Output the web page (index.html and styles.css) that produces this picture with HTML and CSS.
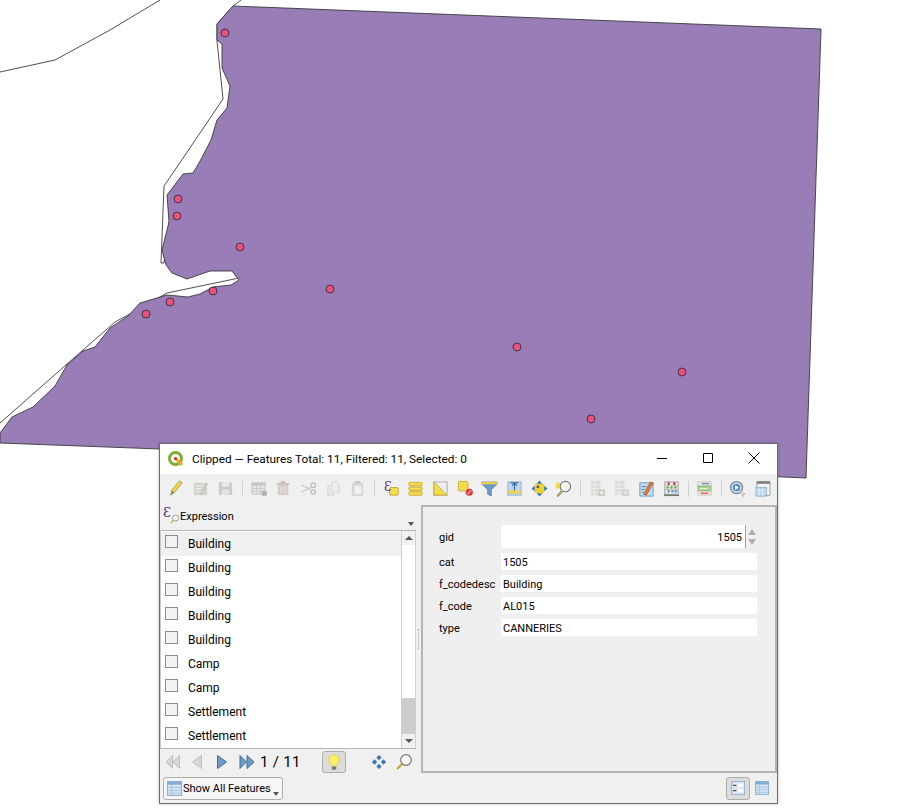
FILE: index.html
```html
<!DOCTYPE html>
<html lang="en">
<head>
<meta charset="utf-8">
<title>Clipped</title>
<link rel="stylesheet" href="styles.css">
</head>
<body>
<svg class="map" width="911" height="808" viewBox="0 0 911 808">
  <g class="outline">
    <path d="M0 72L55 60L110 30L160 0"/>
    <path d="M241 0L233 6L217 24L217 41L223 99L175 170L164 186L161 263L164 263L169 222"/>
    <path d="M239 278L167 293L128 315L115 322L83 350L0 423"/>
  </g>
  <path class="land" d="M233 6L821 29L806 478L160 449L0 443V433L12 417L33 407L55 386L67 365L83 351L95 347L110 328L128 316L140 303L167 295L188 297L200 294L213 287L231 285L239 280L232 271L210 271L187 279L172 273L166 265L162 250L169 222L167 195L183 174L193 173L199 163L211 140L217 120L227 108L230 86L222 68L222 44L217 40L217 24Z"/>
  <g class="pts">
    <circle cx="225" cy="33" r="4"/><circle cx="178" cy="199" r="4"/><circle cx="177" cy="216" r="4"/>
    <circle cx="240" cy="247" r="4"/><circle cx="330" cy="289" r="4"/><circle cx="213" cy="291" r="4"/>
    <circle cx="170" cy="302" r="4"/><circle cx="146" cy="314" r="4"/><circle cx="517" cy="347" r="4"/>
    <circle cx="682" cy="372" r="4"/><circle cx="591" cy="419" r="4"/>
  </g>
</svg>

<section class="window">
  <header class="titlebar">
    <svg class="logo" width="18" height="18" viewBox="0 0 18 18"><circle cx="8.500" cy="8.500" r="6" fill="none" stroke="#7fae2e" stroke-width="3"/><path d="M8.500 8.500L15 15" stroke="#e9a92f" stroke-width="3"/><circle cx="8.500" cy="8.500" r="1.600" fill="#c33"/></svg>
    <span class="title">Clipped — Features Total: 11, Filtered: 11, Selected: 0</span>
    <div class="winctl">
      <svg width="14" height="14" viewBox="0 0 14 14"><path d="M2 7.500H12" stroke="#000"/></svg>
      <svg width="14" height="14" viewBox="0 0 14 14"><path d="M2.500 2.500H11.500V11.500H2.500Z" fill="none" stroke="#000"/></svg>
      <svg width="14" height="14" viewBox="0 0 14 14"><path d="M1.500 1.500L12.500 12.500M12.500 1.500L1.500 12.500" stroke="#000"/></svg>
    </div>
  </header>

  <div class="toolbar">
    <span class="tb"><svg viewBox="0 0 18 18"><path d="M3 16L4 11L12 1L15 3L7 13Z" fill="#f2d64b" stroke="#a08a2a" stroke-width=".8"/><path d="M3 16L4 11L7 13Z" fill="#8a8a80"/></svg></span>
    <span class="tb off"><svg viewBox="0 0 18 18"><rect x="1" y="3" width="14" height="13" fill="#c9c9c2"/><path d="M3 6H11M3 9H9M3 12H9" stroke="#eee"/><path d="M7 15L14 3L16 4L9 16Z" fill="#b5b5ae"/></svg></span>
    <span class="tb off"><svg viewBox="0 0 18 18"><path d="M2 2H14L16 4V16H2Z" fill="#b9bcbf"/><rect x="5" y="2" width="8" height="5" fill="#e6e6e6"/><rect x="5" y="10" width="8" height="6" fill="#dedede"/></svg></span>
    <span class="sep"></span>
    <span class="tb off"><svg viewBox="0 0 18 18"><rect x="1" y="3" width="14" height="12" fill="#e4e4e4" stroke="#b5b5b5"/><rect x="1" y="3" width="14" height="3" fill="#b5b5b5"/><path d="M1 9H15M1 12H15M6 6V15M10 6V15" stroke="#bbb"/><circle cx="14" cy="14" r="3" fill="#999"/></svg></span>
    <span class="tb off"><svg viewBox="0 0 18 18"><rect x="3" y="5" width="11" height="11" fill="#cdbdb6"/><rect x="2" y="3" width="13" height="2" fill="#b9aaa3"/><rect x="6" y="1" width="5" height="2" fill="#b9aaa3"/><path d="M6 7V14M8.500 7V14M11 7V14" stroke="#e6e0dc"/></svg></span>
    <span class="tb off"><svg viewBox="0 0 18 18"><path d="M1 5L11 10M1 13L11 8" stroke="#bbb" stroke-width="1.400"/><circle cx="14" cy="5.500" r="2.400" fill="none" stroke="#aaa" stroke-width="1.400"/><circle cx="14" cy="12.500" r="2.400" fill="none" stroke="#aaa" stroke-width="1.400"/></svg></span>
    <span class="tb off"><svg viewBox="0 0 18 18"><path d="M3 6H9V16H3Z" fill="#e4e4e4" stroke="#ccc"/><path d="M7 2H12L15 5V13H7Z" fill="#ececec" stroke="#ccc"/></svg></span>
    <span class="tb off"><svg viewBox="0 0 18 18"><rect x="3" y="3" width="12" height="14" rx="1" fill="#cfcfca"/><rect x="6" y="1" width="6" height="3" fill="#bbb"/><rect x="6" y="6" width="7" height="9" fill="#f0f0f0"/></svg></span>
    <span class="sep"></span>
    <span class="tb"><svg viewBox="0 0 18 18"><rect x="7" y="8" width="9" height="8" rx="1" fill="#f5dc4d" stroke="#c0a52d"/><text class="eps" x="1" y="12">Ɛ</text></svg></span>
    <span class="tb"><svg viewBox="0 0 18 18"><rect x="2" y="2.500" width="14" height="3.600" rx="1" fill="#f5dc4d" stroke="#c9ae35"/><rect x="2" y="7.500" width="14" height="3.600" rx="1" fill="#f5dc4d" stroke="#c9ae35"/><rect x="2" y="12.500" width="14" height="3.600" rx="1" fill="#f5dc4d" stroke="#c9ae35"/></svg></span>
    <span class="tb"><svg viewBox="0 0 18 18"><rect x="2" y="2" width="14" height="14" fill="#eee" stroke="#aaa"/><path d="M2 2L16 16H2Z" fill="#f5dc4d" stroke="#c9ae35"/></svg></span>
    <span class="tb"><svg viewBox="0 0 18 18"><rect x="1.500" y="1.500" width="10" height="10" rx="1" fill="#f5dc4d" stroke="#c9ae35"/><circle cx="13" cy="13" r="3.800" fill="#d8393c"/><path d="M11 15L15 11" stroke="#fff"/></svg></span>
    <span class="tb"><svg viewBox="0 0 18 18"><path d="M1 2H17V4.500L11 10V17L7 15V10L1 4.500Z" fill="#6b9cc8" stroke="#3f6f9c" stroke-width=".6"/><rect x="1" y="2" width="16" height="2.600" fill="#e9cf4a"/></svg></span>
    <span class="tb"><svg viewBox="0 0 18 18"><rect x="2" y="2" width="14" height="14" fill="#bfd6ec" stroke="#8fb2d2"/><rect x="2.500" y="11" width="13" height="3.500" fill="#f0d64a"/><path d="M9 3V11M6.500 6L9 3.500L11.500 6M5 3H13" stroke="#3f6f9c" stroke-width="1.300" fill="none"/></svg></span>
    <span class="tb"><svg viewBox="0 0 18 18"><rect x="4" y="4" width="10" height="10" fill="#f0d22f"/><path d="M9 .5L12 4H6ZM9 17.500L6 14H12ZM.5 9L4 6V12ZM17.500 9L14 12V6Z" fill="#3f76ad"/><rect x="6" y="6" width="2.500" height="2.500" fill="#556"/></svg></span>
    <span class="tb"><svg viewBox="0 0 18 18"><path d="M2 17L6 12L7.500 13.500L3 17.500Z" fill="#dcbc36" stroke="#333" stroke-width=".5"/><path d="M1 3H5V9H1Z" fill="#f0d84a"/><circle cx="11" cy="7" r="5.500" fill="#f4f4ee" stroke="#777" stroke-width="1.200"/></svg></span>
    <span class="sep"></span>
    <span class="tb off"><svg viewBox="0 0 18 18"><rect x="2" y="1" width="10" height="15" fill="#d2d2cc"/><path d="M2 5H12M2 9H12M2 13H12M6 1V16" stroke="#eee"/><rect x="10" y="10" width="7" height="7" fill="#bdbdb4"/><path d="M13.500 11.500V15.500M11.500 13.500H15.500" stroke="#fff"/></svg></span>
    <span class="tb off"><svg viewBox="0 0 18 18"><rect x="2" y="1" width="10" height="15" fill="#d2d2cc"/><path d="M2 5H12M2 9H12M2 13H12M6 1V16" stroke="#eee"/><rect x="10" y="10" width="7" height="7" fill="#c4c4c0"/><path d="M12 12L15 15M15 12L12 15" stroke="#fff"/></svg></span>
    <span class="tb"><svg viewBox="0 0 18 18"><rect x="2" y="3" width="14" height="14" fill="#c6daee" stroke="#6d99c4"/><path d="M4 7H9M4 10H7M4 13H6" stroke="#53799f"/><path d="M6 15L13 2L16 3.500L9 16Z" fill="#e8792f" stroke="#7a4a23" stroke-width=".6"/></svg></span>
    <span class="tb"><svg viewBox="0 0 18 18"><rect x="1" y="15" width="16" height="2" fill="#777"/><rect x="2" y="2" width="14" height="13" fill="#f1f1f1" stroke="#999"/><path d="M2 6H16M2 10H16" stroke="#bbb"/><circle cx="6" cy="4" r="1.500" fill="#c0504d"/><circle cx="12" cy="4" r="1.500" fill="#c0504d"/><circle cx="5" cy="8" r="1.300" fill="#6aa84f"/><circle cx="9" cy="8" r="1.300" fill="#6aa84f"/><circle cx="13" cy="8" r="1.300" fill="#6aa84f"/><circle cx="6" cy="12" r="1.300" fill="#5b93c4"/><circle cx="10" cy="12" r="1.300" fill="#5b93c4"/><circle cx="13.500" cy="12" r="1.300" fill="#5b93c4"/></svg></span>
    <span class="sep"></span>
    <span class="tb"><svg viewBox="0 0 18 18"><rect x="2" y="2" width="14" height="4" fill="#f4f4f4" stroke="#bbb"/><rect x="2" y="7" width="14" height="4" fill="#a9d492" stroke="#8fbb7b"/><rect x="2" y="12" width="14" height="4" fill="#f7e0e0" stroke="#ccb"/><path d="M4 9H12" stroke="#e6f3df"/><path d="M6 4H14" stroke="#555"/><path d="M5 14H13" stroke="#c33"/></svg></span>
    <span class="sep"></span>
    <span class="tb"><svg viewBox="0 0 18 18"><circle cx="8" cy="8" r="6.300" fill="#dfe8f0" stroke="#7a8a96" stroke-width="1.500"/><circle cx="8" cy="8" r="4" fill="#4f8ec6"/><path d="M6.500 5.500L10.500 8L6.500 10.500Z" fill="#fff"/><path d="M10 10L17 15L14.500 15.500L15 17.500Z" fill="#fff" stroke="#999" stroke-width=".7"/></svg></span>
    <span class="tb"><svg viewBox="0 0 18 18"><rect x="3" y="1.500" width="14" height="15" rx="1" fill="#f1f1f1" stroke="#9a9fa4"/><rect x="3" y="1.500" width="14" height="2.500" fill="#777c80"/><rect x="2" y="8" width="11" height="9" fill="#bcd4ea" stroke="#8fb2d2"/><path d="M2 11H13M2 14H13M5.500 8V17M9 8V17" stroke="#dfeaf4"/></svg></span>
  </div>

  <div class="main">
    <div class="left">
      <div class="exprbar">
        <svg class="expr-ic" width="18" height="18" viewBox="0 0 18 18"><text class="eps" x="0" y="11">Ɛ</text><circle cx="12.500" cy="12" r="3" fill="#fff" stroke="#999"/><path d="M10.500 14L8 17" stroke="#d4b53c" stroke-width="1.500"/></svg>
        <span class="expr-label">Expression</span>
        <i class="caret small"></i>
      </div>
      <div class="listbox">
        <ul class="rows">
          <li class="row hover"><b class="check"></b>Building</li>
          <li class="row"><b class="check"></b>Building</li>
          <li class="row"><b class="check"></b>Building</li>
          <li class="row"><b class="check"></b>Building</li>
          <li class="row"><b class="check"></b>Building</li>
          <li class="row"><b class="check"></b>Camp</li>
          <li class="row"><b class="check"></b>Camp</li>
          <li class="row"><b class="check"></b>Settlement</li>
          <li class="row"><b class="check"></b>Settlement</li>
        </ul>
        <div class="scroll">
          <span class="sbtn"><i class="tri up"></i></span>
          <span class="thumb"></span>
          <span class="track"></span>
          <span class="sbtn"><i class="tri down"></i></span>
        </div>
      </div>
      <div class="nav">
        <svg class="nav1" width="16" height="16" viewBox="0 0 16 16"><path d="M7.500 1.500V14.500L1 8ZM14.500 1.500V14.500L8 8Z" fill="#d5d8da" stroke="#bcc0c3"/></svg>
        <svg class="nav2" width="12" height="16" viewBox="0 0 12 16"><path d="M10.500 1.500V14.500L1.500 8Z" fill="#d5d8da" stroke="#bcc0c3"/></svg>
        <svg class="nav3" width="12" height="16" viewBox="0 0 12 16"><path d="M1.500 1.500V14.500L10.500 8Z" fill="#6f9ac4" stroke="#3f6f9c"/></svg>
        <svg class="nav4" width="16" height="16" viewBox="0 0 16 16"><path d="M1 1.500V14.500L7.500 8ZM8 1.500V14.500L15 8Z" fill="#6f9ac4" stroke="#3f6f9c"/></svg>
        <span class="count">1 / 11</span>
        <span class="bulb"><svg width="16" height="19" viewBox="0 0 18 20"><path d="M9 1C5 1 3 4 3 7C3 10 6 11 6 14H12C12 11 15 10 15 7C15 4 13 1 9 1Z" fill="#f7f06a" stroke="#d8cf55"/><rect x="6.500" y="14.500" width="5" height="3.500" fill="#777"/></svg></span>
        <svg class="nav-move" width="16" height="16" viewBox="0 0 18 18"><path d="M9 1L12 4L9 7L6 4ZM9 11L12 14L9 17L6 14ZM1 9L4 6L7 9L4 12ZM11 9L14 6L17 9L14 12Z" fill="#3f76ad"/></svg>
        <svg class="nav-zoom" width="18" height="18" viewBox="0 0 18 18"><circle cx="11" cy="7" r="5.300" fill="#f7f7f2" stroke="#777" stroke-width="1.200"/><path d="M2 16L7 11" stroke="#c9a530" stroke-width="2.200"/></svg>
      </div>
    </div>
    <div class="splitter"></div>
    <div class="form">
      <div class="field first"><label>gid</label><div class="spin"><span class="spin-val">1505</span><span class="spin-btns"><i class="tri up lt"></i><i class="tri down lt"></i></span></div></div>
      <div class="field"><label>cat</label><span class="val">1505</span></div>
      <div class="field"><label>f_codedesc</label><span class="val">Building</span></div>
      <div class="field"><label>f_code</label><span class="val">AL015</span></div>
      <div class="field"><label>type</label><span class="val">CANNERIES</span></div>
    </div>
  </div>

  <footer class="foot">
    <button class="showall" type="button">
      <svg width="15" height="15" viewBox="0 0 16 16"><rect x=".5" y=".5" width="15" height="15" fill="#d4e4f4" stroke="#84aed4"/><rect x=".5" y=".5" width="15" height="3.500" fill="#84aed4"/><path d="M1 7H15M1 10H15M1 13H15M5 4V15" stroke="#a5c4e0"/></svg>
      <span>Show All Features</span>
      <i class="caret"></i>
    </button>
    <div class="views">
      <span class="view on"><svg width="14" height="14" viewBox="0 0 16 16"><rect x=".5" y=".5" width="15" height="15" fill="#d9e6f2" stroke="#8fb2d2"/><path d="M2 5H6M2 11H6" stroke="#555" stroke-width="1.500"/><rect x="8" y="3" width="6" height="4" fill="#fff"/><rect x="8" y="9" width="6" height="4" fill="#fff"/></svg></span>
      <span class="view"><svg width="14" height="14" viewBox="0 0 16 16"><rect x=".5" y=".5" width="15" height="15" fill="#d4e4f4" stroke="#84aed4"/><rect x=".5" y=".5" width="15" height="3.500" fill="#84aed4"/><path d="M1 7H15M1 10H15M1 13H15M5 4V15" stroke="#a5c4e0"/></svg></span>
    </div>
  </footer>
</section>
</body>
</html>
```

FILE: styles.css
```css
* { box-sizing: border-box; }
html, body { margin: 0; height: 100%; background: #fff; overflow: hidden; }
body { font-family: Roboto, "Open Sans", sans-serif; font-size: 12px; color: #000; }

.map { position: absolute; left: 0; top: 0; display: block; }
.outline path { fill: none; stroke: #3c3c3c; stroke-width: 0.9; }
.land { fill: #987db7; stroke: #3a3a3a; stroke-width: 0.9; stroke-linejoin: round; }
.pts circle { fill: #e8507e; stroke: #33303a; stroke-width: 0.9; }
.eps { font-family: "DejaVu Serif", serif; font-size: 13px; fill: #5a2d76; }

.window { position: absolute; left: 159px; top: 443px; width: 619px; height: 361px; display: flex; flex-direction: column; background: #f0f0f0; border: 1px solid #6b6b6b; box-shadow: 0 0 3px rgba(0,0,0,.25); }

.titlebar { height: 30px; background: #fff; display: flex; align-items: center; padding-left: 7px; flex: none; }
.logo { flex: none; }
.title { margin-left: 7px; font-size: 11.800px; white-space: nowrap; }
.winctl { margin-left: auto; display: flex; gap: 32px; padding: 0 16px 2px 0; }
.winctl svg { display: block; }

.toolbar { height: 31px; flex: none; display: flex; align-items: center; padding: 0 0 2px 4px; background: #f0f0f0; }
.tb { width: 24.700px; height: 24px; display: flex; align-items: center; justify-content: center; flex: none; }
.tb svg { width: 17px; height: 17px; display: block; }
.tb.off { opacity: .7; }
.sep { width: 8.600px; height: 16px; flex: none; }
.sep::before { content: ""; display: block; width: 1px; height: 16px; margin-left: 4px; background: #d0d0d0; }

.main { flex: 1; display: flex; min-height: 0; }
.left { width: 256px; flex: none; display: flex; flex-direction: column; }
.exprbar { height: 25px; display: flex; align-items: center; padding: 0 0 2px 3px; position: relative; flex: none; }
.expr-ic { flex: none; margin-top: -3px; }
.expr-label { font-size: 11px; margin-left: -1px; }
.caret { display: block; width: 0; height: 0; border: 3.500px solid transparent; border-top: 4px solid #555; border-bottom: 0; }
.caret.small { position: absolute; right: 2px; bottom: 4px; }

.listbox { height: 219px; flex: none; display: flex; border-top: 1px solid #b5b5b5; border-bottom: 1px solid #b5b5b5; border-left: 1px solid #c8c8c8; background: #fff; }
.rows { list-style: none; margin: 0; padding: 1px 0 0; flex: 1; min-width: 0; }
.row { height: 24px; display: flex; align-items: center; }
.row.hover { background: #f0f0f0; }
.check { width: 13px; height: 13px; margin: -5px 10px 0 4px; border: 1px solid #8c8c8c; background: #f2f2f2; flex: none; }
.scroll { width: 15px; flex: none; display: flex; flex-direction: column; border-left: 1px solid #d0d0d0; border-right: 1px solid #d0d0d0; background: #f0f0f0; }
.sbtn { height: 14px; flex: none; display: flex; align-items: center; justify-content: center; background: #f0f0f0; }
.thumb { height: 153px; flex: none; background: #fff; }
.track { flex: 1; background: #cdcdcd; }
.tri { display: block; width: 0; height: 0; border-left: 4px solid transparent; border-right: 4px solid transparent; }
.tri.up { border-bottom: 4px solid #555; }
.tri.down { border-top: 4px solid #555; }
.tri.lt { border-left-width: 4.500px; border-right-width: 4.500px; }
.tri.lt.up { border-bottom: 6px solid #b0b0b0; }
.tri.lt.down { border-top: 6px solid #b0b0b0; }

.nav { height: 24px; flex: none; display: flex; align-items: center; padding: 2px 0 0 5px; }
.nav svg { display: block; flex: none; }
.nav2 { margin-left: 10px; }
.nav3 { margin-left: 13px; }
.nav4 { margin-left: 11px; }
.count { font-size: 15px; letter-spacing: .3px; margin-left: 5px; width: 44px; white-space: nowrap; }
.bulb { width: 24px; height: 22px; margin-left: 18px; display: flex; align-items: center; justify-content: center; background: #dcdcdc; border: 1px solid #adadad; border-radius: 3px; flex: none; }
.nav-move { margin-left: 25px; }
.nav-zoom { margin-left: 8px; }

.splitter { width: 5px; flex: none; display: flex; align-items: center; justify-content: center; }
.splitter::after { content: ""; display: block; height: 20px; border-left: 1px dotted #a8a8a8; }
.form { flex: 1; background: #efefef; border: 2px solid #b4b4b4; padding: 18px 18px 0 16px; display: flex; flex-direction: column; gap: 5px; font-size: 11px; }
.field { display: flex; align-items: center; height: 17px; }
.field.first { height: 23px; }
.field label { width: 62px; flex: none; white-space: nowrap; padding-top: 2px; }
.val { flex: 1; height: 17px; line-height: 19px; background: #fff; padding-left: 2px; overflow: hidden; }
.spin { flex: 1; height: 23px; display: flex; align-items: stretch; }
.spin-val { flex: 1; background: #fff; text-align: right; padding-right: 3px; line-height: 25px; overflow: hidden; }
.spin-btns { width: 12px; flex: none; display: flex; flex-direction: column; justify-content: center; align-items: center; gap: 4px; border-left: 1px solid #a0a0a0; }

.foot { height: 30px; flex: none; display: flex; align-items: center; padding: 0 3px; justify-content: space-between; }
.showall { height: 23px; width: 120px; padding: 0 0 0 3px; display: flex; align-items: center; gap: 1px; font: inherit; font-size: 11px; color: #000; background: #f6f6f6; border: 1px solid #adadad; border-radius: 3px; position: relative; white-space: nowrap; }
.showall .caret { position: absolute; right: 3px; bottom: 3px; }
.views { display: flex; align-items: center; }
.view { width: 24px; height: 23px; display: flex; align-items: center; justify-content: center; border: 1px solid transparent; border-radius: 3px; }
.view.on { background: #dcdcdc; border-color: #adadad; }
```
